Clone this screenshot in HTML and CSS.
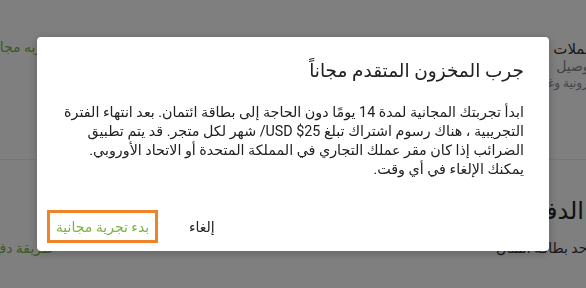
FILE: index.html
```html
<!DOCTYPE html>
<html lang="ar" dir="rtl">
<head>
<meta charset="utf-8">
<title>المخزون المتقدم</title>
<link rel="stylesheet" href="styles.css">
</head>
<body>
<div class="page">
  <section class="top-row">
    <div class="info">
      <div class="info-title">العملات</div>
      <div class="info-sub">توصيل</div>
      <div class="info-small">إلكترونية وغيرها</div>
    </div>
    <a class="link link-top">تجربه مجانية</a>
  </section>
  <hr class="divider">
  <section class="pay">
    <h2 class="pay-title">الدفع</h2>
    <div class="pay-row">
      <span class="pay-text">واحد بطاقة ائتمان</span>
      <a class="link link-bottom">طريقة دفع</a>
    </div>
  </section>
</div>

<div class="overlay">
  <div class="modal" role="dialog">
    <h1 class="modal-title">جرب المخزون المتقدم مجاناً</h1>
    <p class="modal-body">ابدأ تجربتك المجانية لمدة 14 يومًا دون الحاجة إلى بطاقة ائتمان. بعد انتهاء الفترة<br>التجريبية ، هناك رسوم اشتراك تبلغ 25$ USD/ شهر لكل متجر. قد يتم تطبيق<br>الضرائب إذا كان مقر عملك التجاري في المملكة المتحدة أو الاتحاد الأوروبي.<br>يمكنك الإلغاء في أي وقت.</p>
    <div class="actions">
      <button class="btn btn-cancel">إلغاء</button>
      <button class="btn btn-trial">بدء تجرية مجانية</button>
    </div>
  </div>
</div>
</body>
</html>
```
FILE: styles.css
```css
html, body {
  margin: 0;
  padding: 0;
}
body {
  width: 586px;
  height: 288px;
  overflow: hidden;
  background: #ffffff;
  font-family: Roboto, "DejaVu Sans", sans-serif;
  color: #212121;
  direction: rtl;
}
.page {
  display: flex;
  flex-direction: column;
}
.top-row {
  display: flex;
  justify-content: space-between;
  align-items: flex-start;
  padding-top: 40px;
  margin-left: -16px;
}
.info {
  display: flex;
  flex-direction: column;
  align-items: flex-start;
}
.info-title {
  font-size: 15px;
  line-height: 18px;
  color: #333333;
  margin-right: -15px;
}
.info-sub {
  font-size: 14px;
  line-height: 17px;
  color: #888888;
  margin-right: -8px;
}
.info-small {
  font-size: 12px;
  line-height: 16px;
  color: #888888;
  margin-right: -20px;
}
.link {
  color: #7cb342;
  font-size: 14px;
  line-height: 18px;
  text-decoration: none;
}
.link-top {
  margin-top: -2px;
}
.divider {
  border: 0;
  border-top: 1px solid #eeeeee;
  margin: 68px 0 0;
}
.pay {
  display: flex;
  flex-direction: column;
  padding-right: 2px;
}
.pay-title {
  margin: 35px 0 0;
  font-size: 24px;
  line-height: 32px;
  font-weight: normal;
  color: #222222;
}
.pay-row {
  display: flex;
  justify-content: space-between;
  margin-top: 12px;
  margin-right: -14px;
  margin-left: -8px;
  font-size: 14px;
  line-height: 18px;
}
.pay-text {
  color: #333333;
}
.overlay {
  position: fixed;
  inset: 0;
  background: rgba(0, 0, 0, 0.5);
  display: flex;
  align-items: center;
  justify-content: center;
}
.modal {
  width: 512px;
  height: 214px;
  box-sizing: border-box;
  background: #ffffff;
  border-radius: 4px;
  box-shadow: 0 2px 10px rgba(0, 0, 0, 0.25);
  padding: 20px 25px 8px 24px;
  display: flex;
  flex-direction: column;
  direction: rtl;
  text-align: right;
}
.modal-title {
  margin: 0;
  font-size: 18.5px;
  line-height: 28px;
  font-weight: normal;
  color: #212121;
}
.modal-body {
  margin: 18px 0 0;
  font-size: 14.3px;
  line-height: 19px;
  color: #212121;
}
.actions {
  margin-top: auto;
  margin-left: -14px;
  display: flex;
  flex-direction: row;
  justify-content: flex-end;
  align-items: center;
  gap: 19px;
}
.btn {
  font-family: inherit;
  font-size: 14px;
  background: none;
  cursor: pointer;
  height: 33px;
  box-sizing: border-box;
  white-space: nowrap;
}
.btn-trial {
  width: 111px;
  border: 3px solid #f08228;
  color: #7cb342;
  padding: 0 4px;
}
.btn-cancel {
  border: 0;
  color: #212121;
  padding: 0 12px;
}
```
